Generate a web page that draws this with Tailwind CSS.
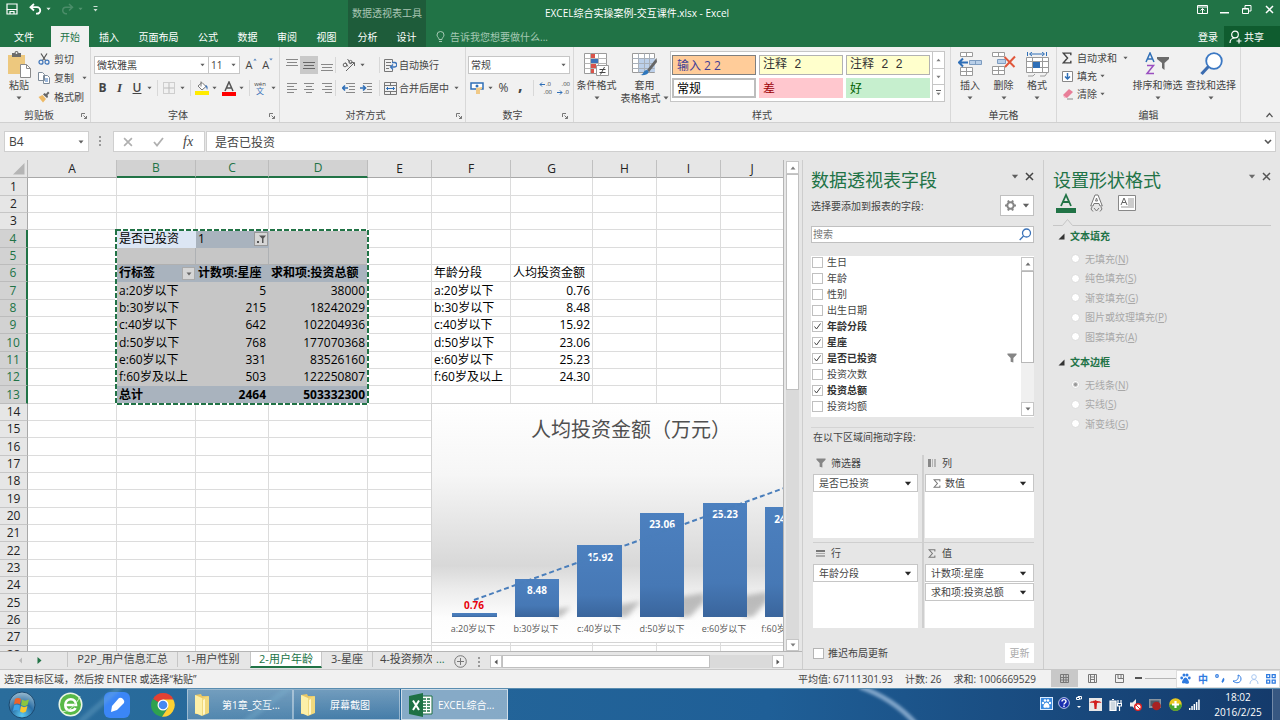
<!DOCTYPE html>
<html lang="zh-CN">
<head>
<meta charset="utf-8">
<title>EXCEL综合实操案例-交互课件.xlsx - Excel</title>
<script src="https://cdn.jsdelivr.net/npm/@tailwindcss/browser@4"></script>
</head>
<body class="flex h-screen flex-col overflow-hidden bg-[#e6e6e6] font-['Open_Sans','Noto_Sans_CJK_SC',sans-serif] text-[10px] leading-[14px] whitespace-nowrap text-[#444]">
<svg class="hidden" aria-hidden="true">
  <symbol id="caret" viewBox="0 0 6 4"><path d="M0.5 0.5h5L3 3.5z" fill="currentColor" fill-opacity="0.850"/></symbol>
  <symbol id="caret-up" viewBox="0 0 6 4"><path d="M0.5 3.5h5L3 0.5z" fill="currentColor" fill-opacity="0.850"/></symbol>
  <symbol id="launch" viewBox="0 0 6 6"><path d="M0.5 4V0.5H4M2.5 2.5l3 3M5.5 3v2.5H3" fill="none" stroke="#777"/></symbol>
  <symbol id="funnel" viewBox="0 0 11 11"><path d="M0.5 0.5h10v1.5L7 5.5V10.5l-3-1V5.500L0.500 2z" fill="#858585"/></symbol>
  <symbol id="sigma" viewBox="0 0 9 11"><path d="M8 3V1H1l4 4.500L1 10h7V8" fill="none" stroke="currentColor" stroke-width="1.300"/></symbol>
  <symbol id="close" viewBox="0 0 9 9"><path d="M1 1l7 7M8 1L1 8" fill="none" stroke="currentColor" stroke-width="1.500"/></symbol>
  <symbol id="folder" viewBox="0 0 20 24"><path d="M2 2l6-1 1 2h6v17l-4 1H2z" fill="#e8c766"/><path d="M2 2l7 3v18l-7-3z" fill="#fdf0a8"/><path d="M9 5l7-2v17l-7 3z" fill="#f1d97d"/><path d="M10 7l2-1v15l-2 1z" fill="#fff6c8"/></symbol>
</svg>

<!-- Title bar and ribbon tabs -->
<header class="flex h-[47px] shrink-0 bg-[#217346] text-white">
  <div class="flex w-[348px] shrink-0 flex-col">
    <div class="flex h-[26px] items-start gap-[10px] pt-[3px] pl-[6px]">
      <button aria-label="保存"><svg class="h-3 w-3" viewBox="0 0 12 12" fill="none" stroke="#fff" stroke-width="1.200"><path d="M1 1h10v10H1zM1 6.500h10M4 11V8.500h4V11"/></svg></button>
      <button aria-label="撤消" class="flex items-center gap-1 pl-[1px]"><svg class="h-3 w-[13px]" viewBox="0 0 13 12" fill="none" stroke="#fff" stroke-width="1.800"><path d="M5 1L1.500 4.200 5 7.500M2 4.200h6a3.200 3.200 0 0 1 0 6.500H7"/></svg><svg class="h-1 w-[5px]"><use href="#caret"/></svg></button>
      <button aria-label="恢复" class="flex items-center gap-1 text-[#5b9a77]"><svg class="h-3 w-[13px]" viewBox="0 0 13 12" fill="none" stroke="#4b8d69" stroke-width="1.500"><path d="M8 1l3.500 3.200L8 7.500M11 4.200H5a3.200 3.200 0 0 0 0 6.500h1"/></svg><svg class="h-1 w-[5px]"><use href="#caret"/></svg></button>
      <button aria-label="自定义快速访问工具栏" class="pt-[3px]"><svg class="h-[6px] w-[5px]" viewBox="0 0 5 6" fill="#cfe0d6"><path d="M0.500 0h4v1h-4zM0.500 3h4L2.500 5.500z"/></svg></button>
    </div>
    <nav class="flex h-[21px]">
      <button class="w-[51px] pr-[3px]">文件</button><button class="w-[38px] bg-[#f1f1f1] text-[#217346]">开始</button><button class="w-[40px]">插入</button><button class="w-[59px]">页面布局</button><button class="w-[40px]">公式</button><button class="w-[39px]">数据</button><button class="w-[40px]">审阅</button><button class="w-[39px]">视图</button>
    </nav>
  </div>
  <div class="flex w-[78px] shrink-0 flex-col bg-[#1e5c3a]">
    <div class="flex h-[26px] items-center justify-center text-[#a9c6b4]">数据透视表工具</div>
    <div class="flex h-[21px]"><button class="flex-1">分析</button><button class="flex-1">设计</button></div>
  </div>
  <div class="flex min-w-0 flex-1 flex-col">
    <div class="flex h-[26px] items-center justify-between pr-[6px] pl-[119px]">
      <h1>EXCEL综合实操案例-交互课件.xlsx - Excel</h1>
      <div class="flex items-center gap-3 pb-2">
        <button aria-label="功能区显示选项"><svg class="h-[9px] w-[11px]" viewBox="0 0 11 9" fill="none" stroke="#fff"><path d="M0.500 0.500h10v8h-10zM0.500 2h10M5.500 8V3.500M3.500 5.500l2-2 2 2"/></svg></button>
        <button aria-label="最小化"><svg class="h-[9px] w-[9px]" viewBox="0 0 9 9"><path d="M0 7h9v1.500H0z" fill="#fff"/></svg></button>
        <button aria-label="还原" class="pl-px"><svg class="h-[9px] w-[10px]" viewBox="0 0 10 9" fill="none" stroke="#fff"><path d="M0.500 3.500h6v5h-6zM0.500 4h6M3 3V0.500h6V6H7"/></svg></button>
        <button aria-label="关闭" class="pl-px"><svg class="h-[9px] w-[9px]"><use href="#close"/></svg></button>
      </div>
    </div>
    <div class="flex h-[21px] items-center pl-[10px]">
      <svg class="h-3 w-[9px]" viewBox="0 0 9 12" fill="none" stroke="#a5c9b4"><path d="M3 8.500C3 6.500 1 6 1 4a3.500 3.500 0 0 1 7 0c0 2-2 2.500-2 4.500zM3 10.500h3"/></svg>
      <button class="ml-[5px] text-[#a5c9b4]">告诉我您想要做什么...</button>
      <a href="#" class="ml-auto pr-[6px]">登录</a>
      <button class="flex h-full w-[56px] items-center gap-[2px] bg-[#0f5c2f] pl-[5px]"><svg class="h-[14px] w-[13px]" viewBox="0 0 13 14" fill="none" stroke="#fff" stroke-width="1.200"><circle cx="6" cy="4.500" r="3.300"/><path d="M1 13c0-3 2-5 4.500-5M10 8.500v5M7.500 11h5"/></svg>共享</button>
    </div>
  </div>
</header>

<!-- Ribbon -->
<section class="flex h-[76px] shrink-0 border-b border-[#d0d0d0] bg-[#f1f1f1]">
  <div class="flex w-[91px] shrink-0 flex-col border-r border-[#d8d8d8]">
    <div class="flex h-[60px]">
      <button class="flex w-[38px] flex-col items-center pt-[4px]">
        <svg class="h-[27px] w-[24px]" viewBox="0 0 24 27"><path d="M1 4h17v19H1z" fill="#edc87e"/><path d="M5 2h2.500a2 2 0 0 1 4 0H14v4H5z" fill="#6b6b6b"/><circle cx="9.500" cy="2" r="0.900" fill="#f1f1f1"/><path d="M13.500 13.500h6l4 4v9h-10z" fill="#fff" stroke="#8a8a8a"/><path d="M19.500 13.500v4h4" fill="none" stroke="#8a8a8a"/></svg>
        <span>粘贴</span><svg class="mt-[4px] h-1 w-[6px]"><use href="#caret"/></svg>
      </button>
      <div class="flex flex-col pt-[2px]">
        <button class="flex h-[19px] items-center gap-1"><svg class="h-3 w-3" viewBox="0 0 12 12" fill="none"><path d="M3 0.500l4.500 7M9 0.500L4.500 7.500" stroke="#555" stroke-width="1.200"/><circle cx="3" cy="9.200" r="2" stroke="#3b73b9" stroke-width="1.200"/><circle cx="9" cy="9.200" r="2" stroke="#3b73b9" stroke-width="1.200"/></svg>剪切</button>
        <button class="flex h-[19px] items-center gap-1"><svg class="h-3 w-3" viewBox="0 0 12 12" fill="#fff" stroke="#7c8a99"><path d="M0.500 0.500h4l2 2v6h-6zM5.500 3.500h4l2 2v6h-6z"/><path d="M7 7h3M7 9h3" stroke="#3b73b9"/></svg>复制<svg class="ml-[4px] h-1 w-[5px]"><use href="#caret"/></svg></button>
        <button class="flex h-[19px] items-center gap-1"><svg class="h-3 w-3" viewBox="0 0 12 12"><path d="M0.500 6l4-2 3.500 4-3 3.500z" fill="#edb965"/><path d="M5 3.500l1.500-1.500 1.500 1 2-2.500 1.500 1.500-2 2 .5 2-1 1z" fill="#666"/></svg>格式刷</button>
      </div>
    </div>
    <div class="flex h-[15px] items-center pr-[3px] pl-[24px]">剪贴板<svg class="mt-[3px] ml-auto h-[6px] w-[6px]"><use href="#launch"/></svg></div>
  </div>

  <div class="flex w-[189px] shrink-0 flex-col border-r border-[#d8d8d8]">
    <div class="flex h-[60px] flex-col gap-[4px] pt-[9px] pl-[3px]">
      <div class="flex h-[18px] items-center">
        <label class="relative h-full w-[117px] border border-[#c6c6c6] bg-white"><select aria-label="字体" class="h-full w-full appearance-none bg-white pl-[2px]"><option>微软雅黑</option></select><svg class="pointer-events-none absolute top-[6px] right-[3px] h-1 w-[5px]"><use href="#caret"/></svg></label>
        <label class="relative -ml-px h-full w-[32px] border border-[#c6c6c6] bg-white"><select aria-label="字号" class="h-full w-full appearance-none bg-white pl-[2px]"><option>11</option></select><svg class="pointer-events-none absolute top-[6px] right-[3px] h-1 w-[5px]"><use href="#caret"/></svg></label>
        <button class="ml-[6px] flex w-[17px]" aria-label="增大字号"><span class="text-[11px]">A</span><svg class="h-[3px] w-[4px] text-[#3b73b9]"><use href="#caret-up"/></svg></button>
        <button class="flex w-[17px] items-start" aria-label="减小字号"><span class="text-[11px]">A</span><svg class="h-[3px] w-[4px] text-[#3b73b9]"><use href="#caret"/></svg></button>
      </div>
      <div class="flex h-[20px] items-center">
        <button class="w-[17px] text-[12px] font-bold">B</button>
        <button class="w-[17px] font-['Liberation_Serif',serif] text-[13px] font-bold italic">I</button>
        <button class="w-[18px] text-[12px] font-semibold underline">U</button>
        <svg class="ml-px h-1 w-[5px]"><use href="#caret"/></svg><i class="ml-[5px] h-[16px] border-l border-[#d8d8d8]"></i>
        <button class="ml-[5px]" aria-label="边框"><svg class="h-3 w-3" viewBox="0 0 12 12" fill="none" stroke="#aaa"><path d="M0.500 0.500h11v11H0.500z" stroke-dasharray="1 1"/><path d="M6 1v10M1 6h10" stroke="#bbb"/></svg></button>
        <svg class="ml-[5px] h-1 w-[5px]"><use href="#caret"/></svg><i class="ml-[5px] h-[16px] border-l border-[#d8d8d8]"></i>
        <button class="ml-[4px]" aria-label="填充颜色"><svg class="h-[14px] w-[14px]" viewBox="0 0 14 14"><path d="M3 5l4-3.500 4 4L7 9z" fill="#fff" stroke="#777"/><path d="M6 0.500v5" stroke="#777" fill="none"/><path d="M11 4c2 1 2 3 1 5-.5-2-.5-3-2-4z" fill="#3b73b9"/><path d="M0 10h14v4H0z" fill="#ffeb00"/></svg></button>
        <svg class="ml-[3px] h-1 w-[5px]"><use href="#caret"/></svg>
        <button class="ml-[5px]" aria-label="字体颜色"><svg class="h-[15px] w-[14px]" viewBox="0 0 14 15"><path d="M3 10l4-9 4 9M4.500 7h5" fill="none" stroke="#555" stroke-width="1.500"/><path d="M0 11h14v4H0z" fill="#f00"/></svg></button>
        <svg class="ml-[3px] h-1 w-[5px]"><use href="#caret"/></svg><i class="ml-[5px] h-[16px] border-l border-[#d8d8d8]"></i>
        <button class="ml-[4px] flex w-[12px] flex-col items-center text-[6px] leading-[6px]" aria-label="拼音"><span>wén</span><span class="text-[8px] leading-[8px] text-[#3b73b9]">文</span></button>
        <svg class="ml-[5px] h-1 w-[5px]"><use href="#caret"/></svg>
      </div>
    </div>
    <div class="relative flex h-[15px] items-center justify-center pr-[14px]">字体<svg class="absolute top-[6px] right-[4px] h-[6px] w-[6px]"><use href="#launch"/></svg></div>
  </div>

  <div class="flex w-[186px] shrink-0 flex-col border-r border-[#d8d8d8]">
    <div class="flex h-[60px] flex-col gap-[5px] pt-[9px] pl-[3px]">
      <div class="flex h-[18px] items-center text-[#888]">
        <button class="flex w-[17px] justify-center" aria-label="顶端对齐"><svg class="h-[14px] w-3" viewBox="0 0 12 14" stroke="currentColor"><path d="M0 1.500h12M1 4.500h10M0 7.500h12"/></svg></button>
        <button class="flex h-[18px] w-[18px] items-center justify-center bg-[#c9c9c9]" aria-label="垂直居中"><svg class="h-[11px] w-3" viewBox="0 0 12 11" stroke="#666"><path d="M0 2.500h12M1 5.500h10M0 8.500h12"/></svg></button>
        <button class="flex w-[17px] justify-center" aria-label="底端对齐"><svg class="h-[14px] w-3" viewBox="0 0 12 14" stroke="currentColor"><path d="M0 6.500h12M1 9.500h10M0 12.500h12"/></svg></button>
        <i class="mr-[6px] h-[16px] border-l border-[#d8d8d8]"></i>
        <button aria-label="方向"><svg class="h-[14px] w-[14px]" viewBox="0 0 14 14" fill="none" stroke="#666"><circle cx="3" cy="7" r="1.800"/><path d="M3.500 4.500l2.500 4M5.500 1l3.500 5M4 13l8-8M9 4.500h3.500V8"/><circle cx="8.500" cy="4" r="1.600"/></svg></button>
        <svg class="ml-[4px] h-1 w-[5px] text-[#444]"><use href="#caret"/></svg>
        <i class="mr-[4px] ml-[14px] h-[16px] border-l border-[#d8d8d8]"></i>
        <button class="flex items-center gap-[2px] text-[#444]"><svg class="h-[13px] w-[13px]" viewBox="0 0 13 13" fill="none" stroke="#777"><path d="M0.500 0.500h8v3M0.500 0.500v12h8V10M2 3.500h5M2 6.500h5M2 9.500h3"/><path d="M8 3.500h2.500a2 2 0 0 1 0 4.500H7M9 5.500L6.500 8 9 10.500" stroke="#3b73b9" stroke-width="1.300"/></svg>自动换行</button>
      </div>
      <div class="flex h-[18px] items-center text-[#888]">
        <button class="flex w-[17px] justify-center" aria-label="左对齐"><svg class="h-[10px] w-[10px]" viewBox="0 0 10 10" stroke="currentColor"><path d="M0 0.500h10M0 3.500h7M0 6.500h10M0 9.500h7"/></svg></button>
        <button class="flex w-[18px] justify-center" aria-label="居中"><svg class="h-[10px] w-[10px]" viewBox="0 0 10 10" stroke="currentColor"><path d="M0 0.500h10M2 3.500h6M0 6.500h10M2 9.500h6"/></svg></button>
        <button class="flex w-[17px] justify-center" aria-label="右对齐"><svg class="h-[10px] w-[10px]" viewBox="0 0 10 10" stroke="currentColor"><path d="M0 0.500h10M3 3.500h7M0 6.500h10M3 9.500h7"/></svg></button>
        <i class="mr-[6px] h-[16px] border-l border-[#d8d8d8]"></i>
        <button aria-label="减少缩进量"><svg class="h-3 w-[13px]" viewBox="0 0 13 12" stroke="#888" fill="none"><path d="M4 1.500h9M7 4.500h6M7 7.500h6M4 10.500h9"/><path d="M6 6H1M3 3.500L0.700 6 3 8.500" stroke="#2f6fb7" stroke-width="1.600"/></svg></button>
        <button class="ml-[5px]" aria-label="增加缩进量"><svg class="h-3 w-[13px]" viewBox="0 0 13 12" stroke="#888" fill="none"><path d="M3 1.500h9M7 4.500h5M7 7.500h5M3 10.500h9"/><path d="M0 6h5M3 3.500L5.500 6 3 8.500" stroke="#2f6fb7" stroke-width="1.600"/></svg></button>
        <i class="mr-[4px] ml-[6px] h-[16px] border-l border-[#d8d8d8]"></i>
        <button class="flex items-center gap-[2px] text-[#444]"><svg class="h-[13px] w-[13px]" viewBox="0 0 13 13" fill="none" stroke="#777"><path d="M0.500 0.500h12v12H0.500zM0.500 3.500h12M0.500 9.500h12M6.500 0.500v3M6.500 9.500v3"/><path d="M2.500 6.500h8M4 5L2.500 6.500 4 8M9 5l1.500 1.500L9 8" stroke="#2f6fb7"/></svg>合并后居中</button>
        <svg class="ml-[5px] h-1 w-[5px] text-[#444]"><use href="#caret"/></svg>
      </div>
    </div>
    <div class="relative flex h-[15px] items-center justify-center pr-[14px]">对齐方式<svg class="absolute top-[6px] right-[3px] h-[6px] w-[6px]"><use href="#launch"/></svg></div>
  </div>

  <div class="flex w-[108px] shrink-0 flex-col border-r border-[#d8d8d8]">
    <div class="flex h-[60px] flex-col gap-[5px] pt-[9px] pl-[2px]">
      <label class="relative h-[18px] w-[102px] border border-[#c6c6c6] bg-white"><select aria-label="数字格式" class="h-full w-full appearance-none bg-white pl-[2px]"><option>常规</option></select><svg class="pointer-events-none absolute top-[6px] right-[3px] h-1 w-[5px]"><use href="#caret"/></svg></label>
      <div class="flex h-[18px] items-center pl-[2px]">
        <button aria-label="会计数字格式"><svg class="h-[13px] w-[14px]" viewBox="0 0 14 13"><path d="M1 1h12v6H1z" fill="#fff" stroke="#2f6fb7" stroke-width="1.500"/><circle cx="7" cy="4" r="1.500" fill="#2f6fb7"/><path d="M6 6l6-1v2l-2 1v4H6z" fill="#f0c987"/></svg></button>
        <svg class="ml-[4px] h-1 w-[5px]"><use href="#caret"/></svg>
        <button class="ml-[4px] w-[13px] text-[12px]">%</button>
        <button class="ml-[8px] flex h-[18px] w-[6px] items-start text-[16px] leading-[12px] font-bold" aria-label="千位分隔">,</button>
        <i class="mr-[5px] ml-[9px] h-[16px] border-l border-[#d8d8d8]"></i>
        <button class="flex w-[13px] flex-col text-[6px] leading-[8px]" aria-label="增加小数位数"><span class="flex items-center gap-px"><svg class="h-[5px] w-[6px]" viewBox="0 0 6 5" fill="none" stroke="#2f6fb7"><path d="M6 2.500H1M3 0.500l-2 2 2 2"/></svg>.0</span><span class="text-right">.00</span></button>
        <button class="ml-[5px] flex w-[13px] flex-col text-[6px] leading-[8px]" aria-label="减少小数位数"><span class="text-right">.00</span><span class="flex items-center gap-px"><svg class="h-[5px] w-[6px]" viewBox="0 0 6 5" fill="none" stroke="#2f6fb7"><path d="M0 2.500h5M3 0.500l2 2-2 2"/></svg>.0</span></button>
      </div>
    </div>
    <div class="relative flex h-[15px] items-center justify-center pr-[14px]">数字<svg class="absolute top-[6px] right-[5px] h-[6px] w-[6px]"><use href="#launch"/></svg></div>
  </div>

  <div class="flex w-[377px] shrink-0 flex-col border-r border-[#d8d8d8]">
    <div class="flex h-[60px]">
      <button class="flex w-[45px] flex-col items-center pt-[6px]">
        <svg class="h-[24px] w-[25px]" viewBox="0 0 25 24"><path d="M0.500 0.500h22v20h-22z" fill="#fff" stroke="#9a9a9a"/><path d="M0.500 5.500h22M0.500 10.500h22M0.500 15.500h22M6.500 0.500v20M14.500 0.500v20" stroke="#b5b5b5" fill="none"/><path d="M7 1h4v4H7zM7 11h5v4H7zM7 16h3v4H7z" fill="#d9534a"/><path d="M7 6h7v4H7z" fill="#3b73b9"/><path d="M12.500 12.500h12v10h-12z" fill="#fff" stroke="#9a9a9a"/><path d="M15.500 16.500h6M15.500 19.500h6M20.500 14l-4 7.500" stroke="#444" fill="none"/></svg>
        <span class="mt-[1px]">条件格式</span><svg class="mt-[4px] h-1 w-[6px]"><use href="#caret"/></svg>
      </button>
      <button class="flex w-[51px] flex-col items-center pt-[6px]">
        <svg class="h-[24px] w-[25px]" viewBox="0 0 25 24"><path d="M0.500 0.500h22v19h-22z" fill="#fff" stroke="#9a9a9a"/><path d="M6 5h17v14H6z" fill="#bcd0ea"/><path d="M0.500 5.500h22M0.500 10.500h22M0.500 15.500h22M6.500 0.500v19M12.500 0.500v19M17.500 0.500v19" stroke="#a8b0ba" fill="none"/><path d="M24.500 5L15 17l2 2 8-10z" fill="#666"/><path d="M8 22c4 0 3-5 7-5 3 1 2 6-7 5z" fill="#2f77bd"/></svg>
        <span class="mt-[1px]">套用</span><span class="flex items-center gap-[2px] leading-[12px]">表格格式<svg class="h-1 w-[6px]"><use href="#caret"/></svg></span>
      </button>
      <div class="mt-[4px] flex h-[51px] w-[275px] border border-[#c6c6c6] bg-white text-[12px] leading-[15px] text-black">
        <div class="grid flex-1 grid-cols-3 grid-rows-2 gap-x-[3px] gap-y-[3px] py-[3px] pr-[2px] pl-[1px] text-left">
          <button class="border border-[#7f7f7f] bg-[#ffcc99] pl-[4px] text-left text-[#3f3f96]">输入 2 2</button>
          <button class="border border-[#b2b2b2] bg-[#ffffcc] pl-[3px] text-left font-['Liberation_Mono','Noto_Sans_CJK_SC',monospace] text-[#333]">注释 2</button>
          <button class="border border-[#b2b2b2] bg-[#ffffcc] pl-[3px] text-left font-['Liberation_Mono','Noto_Sans_CJK_SC',monospace] text-[#333]">注释 2 2</button>
          <button class="border-2 border-[#bdbdbd] bg-white pl-[3px] text-left">常规</button>
          <button class="bg-[#ffc7ce] pl-[4px] text-left text-[#9c0006]">差</button>
          <button class="bg-[#c6efce] pl-[4px] text-left text-[#006100]">好</button>
        </div>
        <div class="flex w-[12px] flex-col divide-y divide-[#c6c6c6] border-l border-[#c6c6c6] text-[#666]">
          <button class="flex flex-1 items-center justify-center" aria-label="上一行"><svg class="h-1 w-[5px]"><use href="#caret-up"/></svg></button>
          <button class="flex flex-1 items-center justify-center" aria-label="下一行"><svg class="h-1 w-[5px]"><use href="#caret"/></svg></button>
          <button class="flex flex-1 flex-col items-center justify-center gap-px" aria-label="其他"><i class="w-[5px] border-t border-[#666]"></i><svg class="h-1 w-[5px]"><use href="#caret"/></svg></button>
        </div>
      </div>
    </div>
    <div class="flex h-[15px] items-center justify-center">样式</div>
  </div>

  <div class="flex w-[106px] shrink-0 flex-col border-r border-[#d8d8d8]">
    <div class="flex h-[60px] pl-[2px]">
      <button class="flex w-[34px] flex-col items-center pt-[5px]"><svg class="h-[25px] w-[25px]" viewBox="0 0 25 25" fill="#fff" stroke="#9a9a9a"><path d="M2.500 0.500h12v4h-12zM8.500 0.500v4M2.500 15.500h12v8h-12zM8.500 15.500v8M2.500 19.500h12"/><path d="M11.500 8.500h12v4h-12zM17.500 8.500v4" fill="#b9cfe8" stroke="#7d9cc0"/><path d="M10 10.500H1.500M5 6.500l-4 4 4 4" stroke="#2f6fb7" stroke-width="2" fill="none"/></svg><span class="mt-[1px]">插入</span><svg class="mt-[4px] h-1 w-[6px]"><use href="#caret"/></svg></button>
      <button class="flex w-[33px] flex-col items-center pt-[5px]"><svg class="h-[25px] w-[25px]" viewBox="0 0 25 25" fill="#fff" stroke="#9a9a9a"><path d="M1.500 0.500h12v4h-12zM7.500 0.500v4M1.500 14.500h12v8h-12zM7.500 14.500v8M1.500 18.500h12"/><path d="M6.500 7.500h8v4h-8z" fill="#b9cfe8" stroke="#7d9cc0"/><path d="M13.500 5l10 10M24 4.500L14 15" stroke="#e0573b" stroke-width="2" fill="none"/></svg><span class="mt-[1px]">删除</span><svg class="mt-[4px] h-1 w-[6px]"><use href="#caret"/></svg></button>
      <button class="flex w-[34px] flex-col items-center pt-[5px]"><svg class="h-[25px] w-[25px]" viewBox="0 0 25 25" fill="#fff" stroke="#9a9a9a"><path d="M1.500 5.500h22v15h-22zM1.500 9.500h22M1.500 15.500h22M7.500 5.500v15M17.500 5.500v15"/><path d="M8 10h7v6H8z" fill="#2f6fb7" stroke="none"/><path d="M3 24h5l2-2M15 24h5l2-3" fill="none"/><path d="M2.500 0v4M21.500 0v4M5 2h14M7 0L4.500 2 7 4M17 0l2.500 2L17 4" stroke="#2f6fb7" fill="none"/></svg><span class="mt-[1px]">格式</span><svg class="mt-[4px] h-1 w-[6px]"><use href="#caret"/></svg></button>
    </div>
    <div class="flex h-[15px] items-center justify-center">单元格</div>
  </div>

  <div class="flex w-[184px] shrink-0 flex-col border-r border-[#d8d8d8]">
    <div class="flex h-[60px] pl-[5px]">
      <div class="flex w-[67px] flex-col pt-[2px]">
        <button class="flex h-[18px] items-center"><svg class="mr-[5px] h-[12px] w-[10px]"><use href="#sigma"/></svg>自动求和<svg class="ml-[6px] h-1 w-[5px]"><use href="#caret"/></svg></button>
        <button class="flex h-[18px] items-center"><svg class="mr-[4px] h-[11px] w-[11px]" viewBox="0 0 11 11" fill="none"><path d="M0.500 0.500h10v10h-10z" fill="#fff" stroke="#888"/><path d="M5.500 2v6M3 5.500L5.500 8 8 5.500" stroke="#2f6fb7" stroke-width="1.500"/></svg>填充<svg class="ml-[3px] h-1 w-[5px]"><use href="#caret"/></svg></button>
        <button class="flex h-[18px] items-center"><svg class="mr-[3px] h-[12px] w-[12px]" viewBox="0 0 12 12"><path d="M1 7l6-6 4 3-6 6H3z" fill="#e87e98"/><path d="M1 7l4 3H3L1 8z" fill="#f7c0cc"/><path d="M5 11h6" stroke="#888"/></svg>清除<svg class="ml-[3px] h-1 w-[5px]"><use href="#caret"/></svg></button>
      </div>
      <button class="flex w-[57px] flex-col items-center pt-[5px]"><svg class="h-[25px] w-[25px]" viewBox="0 0 25 25" fill="none"><path d="M1 10l4-9 4 9M2.500 7h5" stroke="#2f6fb7" stroke-width="1.500"/><path d="M2 13.500h6.500L2 21.500h7" stroke="#9a4fc0" stroke-width="1.500"/><path d="M12 5h12v2l-4.500 4v7L17 16v-5l-5-4z" fill="#6b6b6b"/></svg><span class="mt-[1px]">排序和筛选</span><svg class="mt-[4px] h-1 w-[6px]"><use href="#caret"/></svg></button>
      <button class="flex w-[50px] flex-col items-center pt-[5px]"><svg class="h-[25px] w-[25px]" viewBox="0 0 25 25" fill="none"><circle cx="15" cy="9" r="7.800" fill="#fff" stroke="#3b78c3" stroke-width="1.800"/><path d="M9.500 14.500l-7 7.500" stroke="#3b6cb0" stroke-width="3.200"/></svg><span class="mt-[1px]">查找和选择</span><svg class="mt-[4px] h-1 w-[6px]"><use href="#caret"/></svg></button>
    </div>
    <div class="flex h-[15px] items-center justify-center">编辑</div>
  </div>
  <button class="mt-auto mr-[6px] mb-[4px] ml-auto" aria-label="折叠功能区"><svg class="h-[6px] w-[9px]" viewBox="0 0 9 6" fill="none" stroke="#555" stroke-width="1.200"><path d="M1.500 5l3-3.500 3 3.500"/></svg></button>
</section>

<!-- Formula bar -->
<section class="flex h-[37px] shrink-0 items-start pt-[8px] pr-[4px] pl-[4px] text-[12px]">
  <label class="relative h-[21px] w-[85px] border border-[#cfcfcf] bg-white"><input aria-label="名称框" value="B4" class="h-full w-full bg-white pl-[4px] text-[12px] outline-none"><svg class="pointer-events-none absolute top-[8px] right-[4px] h-1 w-[6px]"><use href="#caret"/></svg></label>
  <svg class="mt-[5px] ml-[10px] h-[11px] w-[3px]" viewBox="0 0 3 11" fill="#999"><path d="M0 0h2v2H0zM0 4h2v2H0zM0 8h2v2H0z"/></svg>
  <div class="ml-[11px] flex h-[21px] w-[92px] items-center border border-[#cfcfcf] bg-white pl-[9px]">
    <button aria-label="取消" class="text-[#b0b0b0]"><svg class="h-[10px] w-[10px]"><use href="#close"/></svg></button>
    <button aria-label="输入" class="ml-[20px]"><svg class="h-[10px] w-[11px]" viewBox="0 0 11 10" fill="none" stroke="#b0b0b0" stroke-width="1.800"><path d="M1 5l3 3.500L10 1"/></svg></button>
    <button class="ml-[19px] font-['Liberation_Serif',serif] text-[14px] italic">fx</button>
  </div>
  <div class="ml-[1px] flex h-[21px] flex-1 items-center border border-[#cfcfcf] bg-white pr-[3px]">
    <input aria-label="编辑栏" value="是否已投资" class="h-full min-w-0 flex-1 bg-white pl-[8px] text-[12px] outline-none">
    <svg class="h-[5px] w-[8px]" viewBox="0 0 8 5" fill="none" stroke="#555" stroke-width="1.600"><path d="M1 1l3 3 3-3"/></svg>
  </div>
</section>

<main class="flex min-h-0 flex-1">
  <!-- Worksheet -->
  <section class="flex min-w-0 flex-1 flex-col">
    <div class="flex min-h-0 flex-1">
      <div class="relative min-w-0 flex-1 overflow-hidden border-r border-[#b5b5b5] bg-white">
        <table class="w-[784px] table-fixed border-separate border-spacing-0 text-[12px] leading-[16px] text-black">
          <colgroup><col class="w-[28px]"><col class="w-[89px]"><col class="w-[79px]"><col class="w-[73px]"><col class="w-[99px]"><col class="w-[64px]"><col class="w-[79px]"><col class="w-[82px]"><col class="w-[64px]"><col class="w-[64px]"><col class="w-[63px]"></colgroup>
          <thead id="cols"></thead>
          <tbody id="rows"></tbody>
        </table>
        <!-- Copy outline round B4:D13 -->
        <svg class="absolute top-[69px] left-[115px] h-[176px] w-[254px]" fill="none" stroke-width="2"><rect x="1" y="1" width="252" height="174" stroke="#fff"/><rect x="1" y="1" width="252" height="174" stroke="#217346" stroke-dasharray="5 2"/></svg>
        <!-- Column chart with linear trend -->
        <svg class="absolute top-[243px] left-[431px] h-[240px] w-[381px] text-[9px]" viewBox="431 403 381 240" role="img" aria-label="人均投资金额（万元）">
          <defs>
            <linearGradient id="plot" x1="0" y1="0" x2="0" y2="1"><stop offset="0" stop-color="#fff"/><stop offset="0.300" stop-color="#f6f6f6"/><stop offset="0.680" stop-color="#d8d8d8"/><stop offset="0.780" stop-color="#ececec"/><stop offset="0.900" stop-color="#fdfdfd"/><stop offset="1" stop-color="#fff"/></linearGradient>
            <linearGradient id="bar" x1="0" y1="0" x2="0" y2="1"><stop offset="0" stop-color="#4c80bf"/><stop offset="0.700" stop-color="#4678b5"/><stop offset="1" stop-color="#3a659c"/></linearGradient>
            <filter id="soft"><feGaussianBlur stdDeviation="2.500"/></filter>
          </defs>
          <path d="M431 403h381v239h-381z" fill="url(#plot)"/>
          <path d="M431.500 403v239.500h381M431 403.500h381" stroke="#d4d4d4" fill="none"/>
          <g fill="#777" fill-opacity="0.450" filter="url(#soft)"><path d="M555 617v-8l16-2-10 10zM618 617v-12l23-4-14 16zM680 617v-20l24-4v9l-14 15zM743 617v-21l24-4v9l-14 16z"/></g>
          <g fill="url(#bar)"><path d="M452 613h45v4h-45z"/><path d="M515 579h44v38h-44z"/><path d="M577 545h45v72h-45z"/><path d="M640 513h44v104h-44z"/><path d="M703 503h44v114h-44z"/><path d="M765 507h45v110h-45z"/></g>
          <g fill="#fff" font-size="10" font-weight="700" text-anchor="middle"><text x="474" y="609" fill="#e8000b">0.76</text><text x="537" y="594">8.48</text><text x="600" y="561">15.92</text><text x="662" y="528">23.06</text><text x="725" y="518">25.23</text><text x="787" y="523">24.30</text></g>
          <path d="M474 600L812 478" fill="none" stroke="#4a7ebb" stroke-width="2" stroke-dasharray="5 3"/>
          <g fill="#595959" text-anchor="middle"><text x="473" y="632">a:20岁以下</text><text x="536" y="632">b:30岁以下</text><text x="599" y="632">c:40岁以下</text><text x="662" y="632">d:50岁以下</text><text x="724" y="632">e:60岁以下</text><text x="787" y="632">f:60岁及以上</text></g>
          <text x="531" y="437" font-size="20" fill="#505050">人均投资金额（万元）</text>
        </svg>
      </div>
      <div class="flex w-[18px] shrink-0 flex-col border-t border-[#e6e6e6] pr-[3px] pl-[2px] text-[#666]">
        <button class="flex h-[13px] items-center justify-center border border-[#c6c6c6] bg-white" aria-label="向上滚动"><svg class="h-1 w-[6px]"><use href="#caret-up"/></svg></button>
        <div class="flex-1 bg-[#dadada]"><div class="h-[216px] border border-[#c0c0c0] bg-white"></div></div>
        <button class="flex h-[12px] items-center justify-center border border-[#c6c6c6] bg-white" aria-label="向下滚动"><svg class="h-1 w-[6px]"><use href="#caret"/></svg></button>
      </div>
    </div>
    <div class="flex h-[18px] shrink-0 items-start border-t border-[#b5b5b5] pr-[18px] text-[11px] leading-[14px]">
      <button class="mt-[5px] ml-[18px]" aria-label="上一张"><svg class="h-[7px] w-[5px]" viewBox="0 0 5 7"><path d="M4 0.500v6L1 3.500z" fill="#bbb"/></svg></button>
      <button class="mt-[5px] ml-[14px]" aria-label="下一张"><svg class="h-[7px] w-[5px]" viewBox="0 0 5 7"><path d="M0.500 0v7l4-3.500z" fill="#217346"/></svg></button>
      <button class="ml-[25px] h-[15px] w-[110px] border-l border-[#c6c6c6] pb-[3px]">P2P_用户信息汇总</button>
      <button class="h-[15px] w-[73px] border-l border-[#c6c6c6] pr-[3px] pb-[3px]">1-用户性别</button>
      <button class="h-[16px] w-[72px] border-x border-b-2 border-x-[#c6c6c6] border-b-[#217346] bg-white pb-[2px] text-[#217346]">2-用户年龄</button>
      <button class="h-[15px] w-[50px] pb-[3px]">3-星座</button>
      <button class="h-[15px] w-[60px] overflow-hidden border-l border-[#c6c6c6] pb-[3px] pl-[7px] text-left">4-投资频次</button>
      <span class="ml-[4px] w-[16px] text-[#217346]">...</span>
      <button class="mt-[3px] ml-[2px]" aria-label="新工作表"><svg class="h-[13px] w-[13px]" viewBox="0 0 13 13" fill="none" stroke="#777"><circle cx="6.500" cy="6.500" r="5.800"/><path d="M6.500 3v7M3 6.500h7"/></svg></button>
      <svg class="mt-[5px] ml-[11px] h-[10px] w-[2px]" viewBox="0 0 2 10" fill="#999"><path d="M0 0h2v2H0zM0 4h2v2H0zM0 8h2v2H0z"/></svg>
      <div class="mt-[3px] ml-[10px] flex h-[13px] min-w-0 flex-1 bg-[#dadada]">
        <button class="flex w-[12px] items-center justify-center border border-[#c6c6c6] bg-white" aria-label="向左滚动"><svg class="h-[6px] w-1" viewBox="0 0 4 6"><path d="M3.500 0.500v5L0.500 3z" fill="#555"/></svg></button>
        <div class="w-[208px] border border-[#c0c0c0] bg-white"></div>
        <button class="ml-auto flex w-[12px] items-center justify-center border border-[#c6c6c6] bg-white" aria-label="向右滚动"><svg class="h-[6px] w-1" viewBox="0 0 4 6"><path d="M0.500 0.500v5l3-2.500z" fill="#555"/></svg></button>
      </div>
    </div>
  </section>

  <!-- PivotTable fields -->
  <aside class="flex w-[241px] shrink-0 flex-col border-l border-[#cdcdcd] pr-[9px] pl-[8px]">
    <div class="flex h-[35px] items-center"><h2 class="pt-[4px] text-[18px] leading-[24px] text-[#217346]">数据透视表字段</h2>
      <button class="mb-[3px] ml-auto" aria-label="任务窗格选项"><svg class="h-[5px] w-2"><use href="#caret"/></svg></button><button class="mb-[3px] ml-[6px]" aria-label="关闭窗格"><svg class="h-[9px] w-[9px]"><use href="#close"/></svg></button></div>
    <div class="flex h-[21px] items-center justify-between"><span>选择要添加到报表的字段:</span>
      <button class="flex h-[21px] w-[34px] items-center justify-center gap-[6px] border border-[#c0c0c0] bg-white" aria-label="工具"><svg class="h-[11px] w-[11px]" viewBox="0 0 11 11" fill="none"><circle cx="5.500" cy="5.500" r="3.200" stroke="#858585" stroke-width="2"/><path d="M3 0.500l1 2M8 0.500l-1 2M0 5.500h2M9 5.500h2M3 10.500l1-2M8 10.500l-1-2" stroke="#858585" stroke-width="2"/></svg><svg class="h-[5px] w-[8px]"><use href="#caret"/></svg></button></div>
    <label class="mt-[10px] flex h-[17px] shrink-0 items-center border border-[#c0c0c0] bg-white pr-[1px]"><input type="text" placeholder="搜索" aria-label="搜索" class="h-full min-w-0 flex-1 bg-white pb-[2px] pl-[1px] text-[10px] outline-none placeholder:text-[#777]"><svg class="h-[13px] w-[13px]" viewBox="0 0 13 13" fill="none" stroke="#3b73b9" stroke-width="1.300"><circle cx="7.500" cy="5" r="4"/><path d="M4.500 8L0.700 12"/></svg></label>
    <div class="mt-[13px] flex h-[161px] shrink-0 overflow-hidden bg-white">
      <div id="fields" class="-mt-[2px] flex flex-1 flex-col"></div>
      <div class="mt-px mb-[1px] flex w-[13px] flex-col bg-[#f0f0f0] text-[#555]">
        <button class="flex h-[14px] items-center justify-center border border-[#c6c6c6] bg-white" aria-label="向上"><svg class="h-1 w-[6px]"><use href="#caret-up"/></svg></button>
        <div class="h-[92px] border border-[#b8b8b8] bg-white"></div>
        <button class="mt-auto flex h-[14px] items-center justify-center border border-[#c6c6c6] bg-white" aria-label="向下"><svg class="h-1 w-[6px]"><use href="#caret"/></svg></button>
      </div>
    </div>
    <div class="mt-[10px] border-t border-[#d4d4d4] pt-[2px] pl-[2px]">在以下区域间拖动字段:</div>
    <div class="mt-[11px] grid grid-cols-[111px_1fr] pl-[2px]">
      <div class="border-r-2 border-b border-[#cfcfcf] pr-[4px] pb-[4px]">
        <h3 class="flex h-[16px] items-center gap-[5px] pl-[3px]"><svg class="h-[10px] w-[10px]"><use href="#funnel"/></svg>筛选器</h3>
        <div class="mt-[3px] h-[64px] bg-white"><button class="flex h-[18px] w-full items-center justify-between border border-[#c6c6c6] bg-white pr-[5px] pl-[5px]">是否已投资<svg class="h-[5px] w-2 text-black"><use href="#caret"/></svg></button></div>
      </div>
      <div class="border-b border-[#cfcfcf] pb-[4px] pl-px">
        <h3 class="flex h-[16px] items-center gap-[6px] pl-[3px]"><svg class="h-[8px] w-2" viewBox="0 0 8 8"><path d="M0 0h3v8H0z" fill="#888"/><path d="M4 0h1v8H4zM6 0h2v8H6z" fill="#b5b5b5"/></svg>列</h3>
        <div class="mt-[3px] h-[64px] bg-white"><button class="flex h-[18px] w-full items-center border border-[#c6c6c6] bg-white pr-[6px] pl-[7px]"><svg class="mr-[4px] h-[9px] w-[8px] text-[#777]"><use href="#sigma"/></svg>数值<svg class="ml-auto h-[5px] w-2 text-black"><use href="#caret"/></svg></button></div>
      </div>
      <div class="border-r-2 border-[#cfcfcf] pt-[2px] pr-[4px]">
        <h3 class="flex h-[16px] items-center gap-[6px] pl-[3px]"><svg class="h-[7px] w-[9px]" viewBox="0 0 9 7"><path d="M0 0h9v2H0z" fill="#777"/><path d="M0 3h9v1H0zM0 5h9v2H0z" fill="#aaa"/></svg>行</h3>
        <div class="mt-[3px] h-[64px] bg-white"><button class="flex h-[18px] w-full items-center justify-between border border-[#c6c6c6] bg-white pr-[5px] pl-[5px]">年龄分段<svg class="h-[5px] w-2 text-black"><use href="#caret"/></svg></button></div>
      </div>
      <div class="pt-[2px] pl-px">
        <h3 class="flex h-[16px] items-center gap-[6px] pl-[3px]"><svg class="h-[9px] w-[8px] text-[#777]"><use href="#sigma"/></svg>值</h3>
        <div class="mt-[3px] flex h-[64px] flex-col gap-[1px] bg-white"><button class="flex h-[18px] w-full items-center justify-between border border-[#c6c6c6] bg-white pr-[6px] pl-[5px]">计数项:星座<svg class="h-[5px] w-2 text-black"><use href="#caret"/></svg></button><button class="flex h-[18px] w-full items-center justify-between border border-[#c6c6c6] bg-white pr-[6px] pl-[5px]">求和项:投资总额<svg class="h-[5px] w-2 text-black"><use href="#caret"/></svg></button></div>
      </div>
    </div>
    <div class="mt-[15px] flex items-center justify-between pl-[2px]"><label class="flex items-center gap-[4px]"><input type="checkbox" class="h-[11px] w-[11px] appearance-none border border-[#b5b5b5] bg-white">推迟布局更新</label><button disabled class="h-[20px] w-[29px] bg-white text-[#aaa]">更新</button></div>
  </aside>

  <!-- Format shape -->
  <aside class="flex w-[237px] shrink-0 flex-col border-l border-[#cdcdcd] pr-[9px] pl-[9px] text-[#a8a8a8]">
    <div class="flex h-[33px] items-center text-[#555]"><h2 class="pt-[6px] text-[18px] leading-[24px] text-[#217346]">设置形状格式</h2>
      <button class="mb-px ml-auto" aria-label="任务窗格选项"><svg class="h-[5px] w-2"><use href="#caret"/></svg></button><button class="mb-px ml-[6px]" aria-label="关闭窗格"><svg class="h-[9px] w-[9px]"><use href="#close"/></svg></button></div>
    <div class="flex h-[20px] items-center pl-[3px]">
      <button aria-label="文本填充与轮廓"><svg class="h-[20px] w-[20px]" viewBox="0 0 20 20" fill="none"><path d="M5 13L10 2l5 11M7 9h6" stroke="#217346" stroke-width="1.800"/><path d="M0 15h20v5H0z" fill="#217346"/></svg></button>
      <button class="ml-[14px]" aria-label="文字效果"><svg class="h-[18px] w-[13px]" viewBox="0 0 13 18" fill="#fff" stroke="#777"><path d="M0.700 12L5 1h3l4.300 11H10L9 9.500H4L3 12z"/><path d="M5.500 7l1-3 1 3zM2 13l-1 2 2 2.500M11 13l1 2-2 2.500M4 14l2.500 3L9 14" fill="none"/></svg></button>
      <button class="ml-[15px]" aria-label="文本框"><svg class="h-[16px] w-[18px]" viewBox="0 0 18 16" fill="none"><path d="M0.500 0.500h17v15H0.500z" fill="#fff" stroke="#888"/><path d="M10 3h6v10H3v-2h7z" fill="#ccc"/><path d="M3 10l3-7 3 7M4 7.500h4" stroke="#666"/></svg></button>
    </div>
    <svg class="mt-[5px] h-[8px] w-full" fill="none" stroke="#c6c6c6"><path d="M0 7.500h9.500l5-6 5 6H400"/></svg>
    <h3 class="mt-[3px] flex h-[14px] items-center gap-[5px] pl-[5px] font-bold text-[#217346]"><svg class="h-[7px] w-[7px]" viewBox="0 0 7 7"><path d="M6.500 0.500v6h-6z" fill="#333"/></svg>文本填充</h3>
    <div id="fill" class="mt-[6px] flex flex-col pl-[18px]"></div>
    <h3 class="mt-[9px] flex h-[14px] items-center gap-[5px] pl-[5px] font-bold text-[#217346]"><svg class="h-[7px] w-[7px]" viewBox="0 0 7 7"><path d="M6.500 0.500v6h-6z" fill="#333"/></svg>文本边框</h3>
    <div id="line" class="mt-[6px] flex flex-col pl-[18px]"></div>
  </aside>
</main>

<!-- Status bar -->
<footer class="flex h-[19px] shrink-0 items-center border-t border-[#c8c8c8] bg-[#f1f1f1] pb-px pl-[4px]">
  <span>选定目标区域，然后按 ENTER 或选择“粘贴”</span>
  <span class="ml-auto">平均值: 67111301.93</span><span class="ml-[12px]">计数: 26</span><span class="ml-[12px]">求和: 1006669529</span>
  <button class="ml-[15px] flex h-full w-[27px] items-center justify-center bg-[#c8c8c8]" aria-label="普通"><svg class="h-[9px] w-[9px]" viewBox="0 0 9 9" fill="none" stroke="#777"><path d="M0.500 0.500h8v8h-8zM3.500 0v9M6 0v9M0 3.500h9M0 6h9"/></svg></button>
  <button class="flex w-[28px] justify-center" aria-label="页面布局"><svg class="h-[9px] w-[9px]" viewBox="0 0 9 9" fill="none" stroke="#777"><path d="M0.500 0.500h8v8h-8zM2.500 1v7M6.500 1v7M3 3h3M3 5.500h3"/></svg></button>
  <button class="flex w-[27px] justify-center" aria-label="分页预览"><svg class="h-[9px] w-[9px]" viewBox="0 0 9 9" fill="none" stroke="#777"><path d="M0.500 0.500h8v8h-8zM3 0.500v4h3v-4M6 4.500h3"/></svg></button>
  <button class="ml-[2px] text-[13px] leading-[10px]" aria-label="缩小"><svg class="h-[3px] w-[7px]"><path d="M0 1h7" stroke="#555" stroke-width="2"/></svg></button>
  <i class="ml-[3px] w-[31px] border-t border-[#b5b5b5]"></i>
  <div class="flex h-[18px] w-[104px] items-center justify-between border border-[#ddd] bg-white px-[3px] text-[#2f7be0]">
    <svg class="h-[11px] w-[11px]" viewBox="0 0 11 11" fill="currentColor"><circle cx="1.700" cy="5" r="1.400"/><circle cx="4" cy="2" r="1.500"/><circle cx="7" cy="2" r="1.500"/><circle cx="9.300" cy="5" r="1.400"/><path d="M5.500 4.500C7 4.500 9 8 9 9.500S7 11 5.500 10.500 2 11 2 9.500 4 4.500 5.500 4.500z"/></svg>
    <span class="font-bold">中</span>
    <svg class="h-[9px] w-[10px]" viewBox="0 0 10 9" fill="none" stroke="currentColor" stroke-width="1.200"><circle cx="2" cy="2" r="1.300"/><path d="M8 4.500c1 1 0 3-1.200 3.500" stroke-width="2"/></svg>
    <svg class="h-[10px] w-[10px]" viewBox="0 0 10 10" fill="none" stroke="currentColor"><path d="M6 1c1 4-1 6-5 6 3 3 8 2 8-2 0-2-1-3.500-3-4z"/></svg>
    <svg class="h-[10px] w-[10px]" viewBox="0 0 10 10" fill="none" stroke="#a9c8f2"><circle cx="5" cy="3" r="2.300"/><path d="M1 10c0-6 8-6 8 0"/></svg>
    <svg class="h-[10px] w-[10px]" viewBox="0 0 10 10" fill="none" stroke="currentColor" stroke-width="1.300"><path d="M0.700 0.700h3v3h-3zM6.200 0.700h3v3h-3zM0.700 6.200h3v3h-3zM6.200 6.200h3v3h-3z"/></svg>
  </div>
</footer>

<!-- Taskbar -->
<footer class="relative flex h-[32px] shrink-0 items-center overflow-hidden border-t border-[#5a8db0] bg-linear-to-r from-[#2a6d9c] via-[#1f5f97] via-60% to-[#143a6b] text-white">
  <!-- Light streaks of the wallpaper behind the glass -->
  <svg class="pointer-events-none absolute inset-0 h-full w-full" viewBox="0 0 1280 32" preserveAspectRatio="none" fill="none"><defs><filter id="glow" x="-50%" y="-50%" width="200%" height="200%"><feGaussianBlur stdDeviation="1.500"/></filter></defs><path d="M860 -2C880 5 900 18 916 36" stroke="#a9c6e2" stroke-opacity="0.700" stroke-width="5" filter="url(#glow)"/><path d="M80 34L120 -2M245 34L290 -2" stroke="#7db4d0" stroke-opacity="0.300" stroke-width="6" filter="url(#glow)"/></svg>
  <button class="ml-[8px]" aria-label="开始"><svg class="h-[28px] w-[28px]" viewBox="0 0 28 28"><defs><radialGradient id="orb" cx="0.500" cy="0.900" r="0.900"><stop offset="0" stop-color="#5cc8f0"/><stop offset="0.500" stop-color="#2a6ea5"/><stop offset="1" stop-color="#9dbdd0"/></radialGradient></defs><circle cx="14" cy="14" r="13" fill="url(#orb)" stroke="#1c4a70"/><path d="M7 8c2-1.500 4-1.500 6 0l-1 5.500c-2-1.500-4-1.500-6 0z" fill="#f0632a"/><path d="M14 8.500c2 1.500 4 1.500 7 0l-1.500 5.500c-2 1.500-4 1.500-6.500 0z" fill="#8cc63f"/><path d="M6 14.500c2-1.500 4-1.500 6 0L11 20c-2-1.500-4-1.500-6 0z" fill="#3fa3e8"/><path d="M13 15c2 1.500 4 1.500 6.500 0L18 20.500c-2 1.500-4 1.500-6 0z" fill="#fcc72c"/></svg></button>
  <button class="ml-[22px]" aria-label="浏览器"><svg class="h-[25px] w-[25px]" viewBox="0 0 25 25" fill="none"><circle cx="12.500" cy="12.500" r="11.300" fill="#58b947" stroke="#eaf7e6" stroke-width="1.500"/><path d="M7.500 13h10.500c0-3.500-2-5.800-5.200-5.800S7.300 9.500 7.300 13s2.200 5.600 5.500 5.600c2.200 0 3.900-1 4.700-2.600" stroke="#fff" stroke-width="2.600"/><path d="M3 19C8 22 19 13 22 4" stroke="#d5efce"/></svg></button>
  <button class="ml-[21px]" aria-label="笔记"><svg class="h-[26px] w-[26px]" viewBox="0 0 26 26"><rect width="26" height="26" rx="6" fill="#3b86f7"/><path d="M7 20l1-6 7-8q2-1 4 1t1 4l-7 7z" fill="#fff"/></svg></button>
  <button class="ml-[21px]" aria-label="Chrome"><svg class="h-[24px] w-[24px]" viewBox="0 0 24 24"><path d="M12 12L2 6a11.700 11.700 0 0 1 20.300 0z" fill="#e34133"/><path d="M12 12L1.700 6A11.700 11.700 0 0 0 11 23.700l5-9z" fill="#2ea24f"/><path d="M12 6.500h10.300A11.700 11.700 0 0 1 11 23.700l6-9z" fill="#fcd032"/><circle cx="12" cy="12" r="5.500" fill="#fff"/><circle cx="12" cy="12" r="4.300" fill="#4688f1"/></svg></button>
  <button class="ml-[12px] flex h-[31px] w-[106px] items-center border border-white/40 bg-linear-to-b from-white/35 to-white/20 pl-[5px]"><svg class="mr-[9px] h-[24px] w-[20px]"><use href="#folder"/></svg>第1章_交互...</button>
  <button class="flex h-[31px] w-[107px] items-center border border-white/40 bg-linear-to-b from-white/35 to-white/15 pl-[5px]"><svg class="mr-[11px] h-[24px] w-[20px]"><use href="#folder"/></svg>屏幕截图</button>
  <button class="ml-[1px] flex h-[31px] w-[107px] items-center border border-white/60 bg-white/45 pl-[7px]"><svg class="mr-[5px] h-[24px] w-[24px]" viewBox="0 0 24 24"><path d="M12 3h11v18H12z" fill="#fff" stroke="#1e7145"/><path d="M14 6h3M18 6h3M14 9h3M18 9h3M14 12h3M18 12h3M14 15h3M18 15h3M14 18h3M18 18h3" stroke="#1e7145" stroke-width="1.500"/><path d="M0 3l14-3v24L0 21z" fill="#1e7145"/><path d="M4 7.500l6 9.500M10 7.500L4 17" stroke="#fff" stroke-width="2"/></svg>EXCEL综合...</button>
  <div class="mb-[3px] ml-auto flex items-center">
    <svg class="h-[13px] w-[13px]" viewBox="0 0 13 13" fill="#fff"><path d="M0 0h13v13H0z" fill="#d9ebff"/><path d="M1 1h11v11H1z" fill="#3b8be0"/><circle cx="3" cy="6" r="1.200"/><circle cx="5" cy="3.500" r="1.300"/><circle cx="8" cy="3.500" r="1.300"/><circle cx="10" cy="6" r="1.200"/><path d="M6.500 5.500c1.500 0 3.500 3 3 4.500s-2 .5-3 .5-2.500 1-3-.5 1.500-4.500 3-4.500z"/></svg>
    <svg class="ml-[5px] h-[12px] w-[12px]" viewBox="0 0 12 12" fill="none"><circle cx="6" cy="6" r="5.400" fill="#1b2fb0" stroke="#b8c4e8"/><path d="M4 4.500c0-2.500 4-2.500 4 0 0 1.500-2 1.500-2 3M6 8.500V10" stroke="#fff" stroke-width="1.400"/></svg>
    <svg class="ml-[6px] h-[14px] w-[6px]" viewBox="0 0 6 14" fill="none" stroke="#fff"><path d="M0.500 3.500h3v-2h-3zM2 1V0.500h3.500V3H4"/><path d="M1 10h4l-2 2z" fill="#fff" stroke="none"/></svg>
  </div>
  <div class="ml-[7px] flex items-center gap-[7px]">
    <svg class="h-[13px] w-[13px]" viewBox="0 0 13 13"><path d="M0 0h13v13H0z" fill="#e8e8e8"/><path d="M0.500 5c2-3 4-1 6-3 2 2 4 0 6 3-2-.5-3 0-4.500 0L7.500 11h-2L5 5C3.500 5 2.500 4.500 0.500 5z" fill="#d21f1f"/></svg>
    <svg class="h-[12px] w-[13px]" viewBox="0 0 13 12" fill="none" stroke="#fff" stroke-width="1.200"><path d="M1 2h6v9.500H1z" fill="#cfd8e0"/><path d="M3 0.500h2M9 1v3M12 1v3M8.500 4.500h4V7h-4zM10.500 7v5"/></svg>
    <svg class="h-[13px] w-[13px]" viewBox="0 0 13 13" fill="none"><path d="M1 4.500h2.500L7 1v11L3.500 8.500H1z" fill="#eee"/><circle cx="9" cy="9" r="3.300" fill="#fff" stroke="#d22" stroke-width="1.500"/><path d="M7 7l4 4" stroke="#d22"/></svg>
    <svg class="h-[13px] w-[13px]" viewBox="0 0 13 13"><path d="M0 1h12v9H0z" fill="#8a95a0"/><path d="M1.500 2.500h9V8h-9z" fill="#4e5b68"/><circle cx="7.500" cy="8" r="4.300" fill="#a82222"/></svg>
    <svg class="h-[13px] w-[13px]" viewBox="0 0 13 13"><circle cx="6.500" cy="6.500" r="6.300" fill="#e9c81f"/><path d="M0.200 6.500a6.300 6.300 0 0 0 12.600 0z" fill="#46a52e"/><path d="M6.500 3v7M3 6.500h7" stroke="#fff" stroke-width="2.200"/></svg>
    <svg class="h-[11px] w-[11px]" viewBox="0 0 11 11" fill="#fff"><path d="M0 9h1.500v2H0zM2.300 7h1.500v4H2.300zM4.600 5h1.500v6H4.600zM6.900 3h1.500v8H6.900zM9.200 0.500h1.500V11H9.200z"/></svg>
  </div>
  <div class="ml-[9px] w-[58px] text-center text-[10px] leading-[15px]">18:02<br>2016/2/25</div>
  <button class="ml-[5px] h-full w-[8px] border-l border-white/30 bg-white/15" aria-label="显示桌面"></button>
</footer>

<script>
const names = ['A','B','C','D','E','F','G','H','I','J'];
const picked = i => i >= 1 && i <= 3;
document.getElementById('cols').innerHTML =
  '<tr class="h-[18px]"><th class="border-r border-b border-[#b5b5b5] bg-[#e6e6e6] p-0"><svg class="ml-auto mr-[2px] h-[13px] w-[13px]" viewBox="0 0 13 13"><path d="M12.500 1v11.500H1z" fill="#b5b5b5"/></svg></th>' +
  names.map((n, i) => '<th scope="col" class="' + (picked(i)
    ? 'border-r border-b-2 border-r-[#bcbcbc] border-b-[#217346] bg-[#d2d2d2] p-0 font-normal text-[#217346]'
    : 'border-r border-b border-r-[#c0c0c0] border-b-[#a8a8a8] bg-[#e6e6e6] p-0 font-normal text-[#222]') +
    '"><div class="h-4">' + n + '</div></th>').join('') + '</tr>';

const data = {
  4: {B: '是否已投资', C: '1'},
  6: {B: '行标签', C: '计数项:星座', D: '求和项:投资总额', F: '年龄分段', G: '人均投资金额'},
  7: {B: 'a:20岁以下', C: 5, D: 38000, F: 'a:20岁以下', G: '0.76'},
  8: {B: 'b:30岁以下', C: 215, D: 18242029, F: 'b:30岁以下', G: '8.48'},
  9: {B: 'c:40岁以下', C: 642, D: 102204936, F: 'c:40岁以下', G: '15.92'},
  10: {B: 'd:50岁以下', C: 768, D: 177070368, F: 'd:50岁以下', G: '23.06'},
  11: {B: 'e:60岁以下', C: 331, D: 83526160, F: 'e:60岁以下', G: '25.23'},
  12: {B: 'f:60岁及以上', C: 503, D: 122250807, F: 'f:60岁及以上', G: '24.30'},
  13: {B: '总计', C: 2464, D: 503332300}
};
const filterOn = '<button aria-label="筛选" class="mt-px flex h-[14px] w-[14px] shrink-0 items-center justify-center border border-[#999] bg-[#d6d6d6]"><svg class="h-2 w-[9px]" viewBox="0 0 9 8"><path d="M2 0.500h7L6.500 3.500V8H5V3.500zM0 6h2v2H0z" fill="#555"/></svg></button>';
const filterOff = '<button aria-label="筛选" class="mt-[2px] flex h-[13px] w-[13px] shrink-0 items-center justify-center border border-[#aaa] bg-[#d6d6d6] text-[#555]"><svg class="h-1 w-[6px]"><use href="#caret"/></svg></button>';
let html = '';
for (let r = 1; r <= 28; r++) {
  const on = r >= 4 && r <= 13;
  html += '<tr class="' + (r % 3 === 1 ? 'h-[18px]' : 'h-[17px]') + '"><th scope="row" class="' + (on
    ? 'border-r-2 border-b border-r-[#217346] border-b-[#bcbcbc] bg-[#d2d2d2] p-0 font-normal text-[#217346]'
    : 'border-r border-b border-r-[#a8a8a8] border-b-[#c6c6c6] bg-[#e6e6e6] p-0 font-normal text-[#222]') +
    '"><div class="h-4">' + r + '</div></th>';
  names.forEach((n, i) => {
    const v = (data[r] || {})[n] ?? '';
    let c = 'border-r border-b border-[#dcdcdc] p-0';
    if (on && picked(i)) {
      if (r === 4 && n === 'B') c = 'border-b border-r border-[#dce6f4] bg-[#dce6f4] p-0';
      else if (r === 6 || r === 13 || (r === 4 && n === 'C')) c = 'border-b border-r border-[#a9b3be] bg-[#a9b3be] p-0';
      else if (r === 5) c = 'border-b border-r border-b-[#b0b0b0] border-r-[#aeb1b4] bg-[#c6c6c6] p-0';
      else c = 'border-b border-r border-[#c6c6c6] bg-[#c6c6c6] p-0';
    }
    const num = (r >= 7 && (n === 'C' || n === 'D' || n === 'G'));
    const bold = (r === 6 || r === 13) && picked(i);
    html += '<td class="' + c + '"><div class="' + (num ? 'flex h-4 justify-end pr-[2px]' : 'flex h-4 justify-between pl-[2px]') + '"><span class="' + (bold ? 'font-bold' : 'font-normal') + '">' + v + '</span>' +
      (r === 4 && n === 'C' ? filterOn : r === 6 && n === 'B' ? filterOff : '') + '</div></td>';
  });
  html += '</tr>';
}
document.getElementById('rows').innerHTML = html;

document.getElementById('fields').innerHTML = [['生日',0],['年龄',0],['性别',0],['出生日期',0],['年龄分段',1],['星座',1],['是否已投资',1],['投资次数',0],['投资总额',1],['投资均额',0]].map(([t, on]) =>
  '<label class="flex h-4 items-center pr-[4px] pl-[1px]"><span class="relative mr-[4px] h-[11px] w-[11px]"><input type="checkbox" class="block h-[11px] w-[11px] appearance-none border border-[#c0c0c0] bg-white"' + (on ? ' checked' : '') + '>' +
  (on ? '<svg class="pointer-events-none absolute top-0 left-0 h-[11px] w-[11px]" viewBox="0 0 11 11" fill="none" stroke="#444"><path d="M2.500 5.500l2 2.500 4-5.500"/></svg>' : '') +
  '</span><span class="' + (on ? 'font-bold text-[#333]' : 'font-normal') + '">' + t + '</span>' +
  (t === '是否已投资' ? '<svg class="ml-auto h-[10px] w-[10px]"><use href="#funnel"/></svg>' : '') + '</label>').join('');

const radios = (id, list) => {
  document.getElementById(id).innerHTML = list.map(([t, k, on], i) =>
    '<label class="' + (i % 2 ? 'flex h-[20px] items-center gap-[5px]' : 'flex h-[19px] items-center gap-[5px]') + '"><input type="radio" disabled name="' + id + '" class="h-[9px] w-[9px] appearance-none rounded-full border border-[#dcdcdc] bg-white checked:bg-[radial-gradient(#999_1px,#fff_3px)]"' + (on ? ' checked' : '') + '><span>' + t + '(<u>' + k + '</u>)</span></label>').join('');
};
radios('fill', [['无填充','N'],['纯色填充','S'],['渐变填充','G'],['图片或纹理填充','P'],['图案填充','A']]);
radios('line', [['无线条','N',1],['实线','S'],['渐变线','G']]);
</script>
</body>
</html>
